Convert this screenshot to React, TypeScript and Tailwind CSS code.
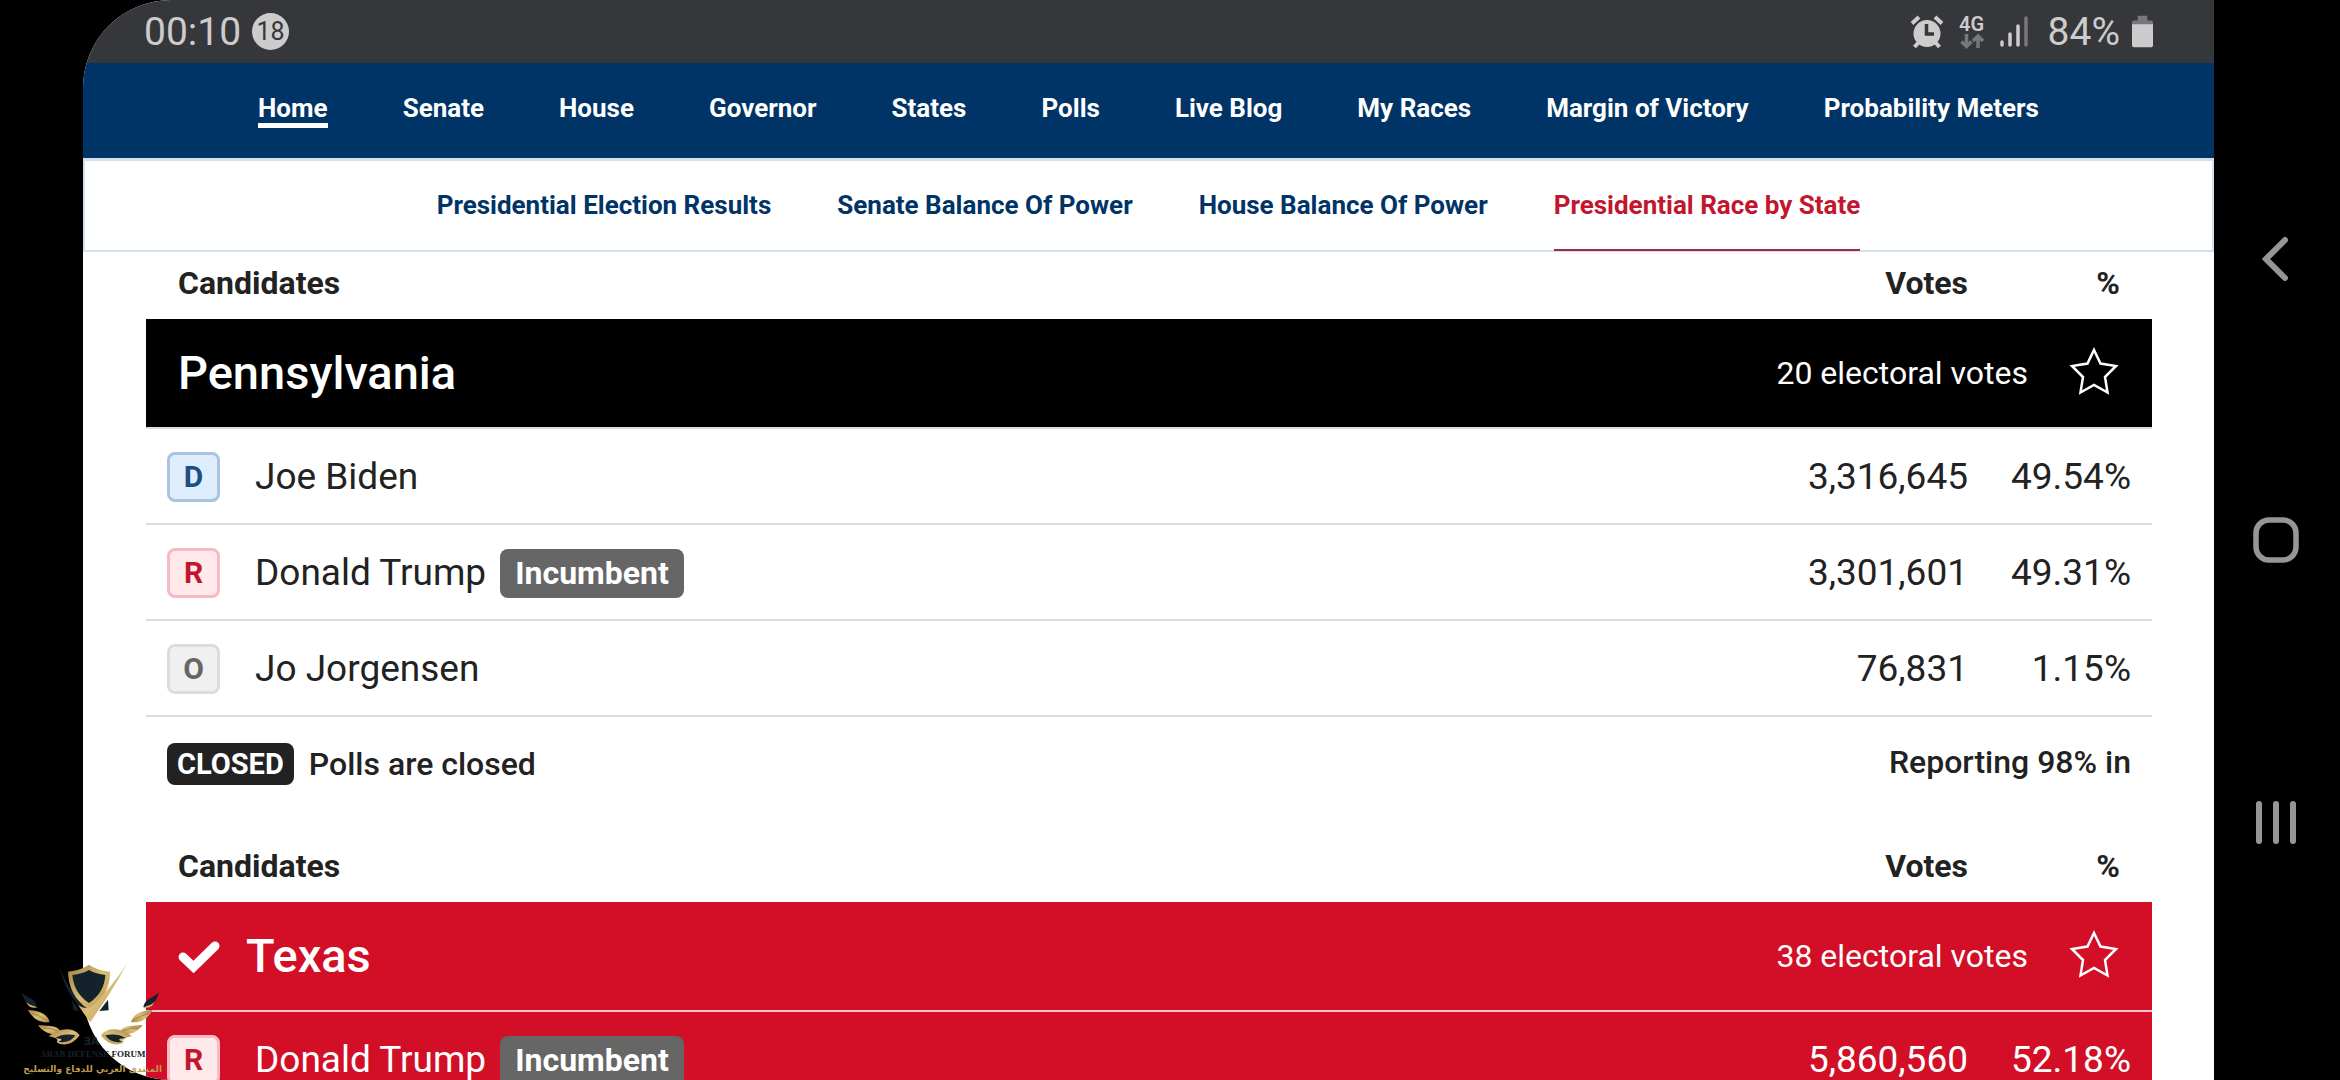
import React from "react";

type TCandidate = {
    party: "D" | "R" | "O";
    name: string;
    incumbent?: boolean;
    votes: string;
    percent: string;
    winner?: boolean;
};
type TRace = {
    state: string;
    electoralVotes: number;
    called?: boolean;
    candidates: TCandidate[];
    reporting: string;
};

const navLinks = ["Home", "Senate", "House", "Governor", "States", "Polls", "Live Blog", "My Races", "Margin of Victory", "Probability Meters"];
const subLinks = ["Presidential Election Results", "Senate Balance Of Power", "House Balance Of Power", "Presidential Race by State"];

const races: TRace[] = [
    {
        state: "Pennsylvania",
        electoralVotes: 20,
        candidates: [
            { party: "D", name: "Joe Biden", votes: "3,316,645", percent: "49.54%" },
            { party: "R", name: "Donald Trump", incumbent: true, votes: "3,301,601", percent: "49.31%" },
            { party: "O", name: "Jo Jorgensen", votes: "76,831", percent: "1.15%" },
        ],
        reporting: "Reporting 98% in",
    },
    {
        state: "Texas",
        electoralVotes: 38,
        called: true,
        candidates: [
            { party: "R", name: "Donald Trump", incumbent: true, votes: "5,860,560", percent: "52.18%", winner: true },
        ],
        reporting: "",
    },
];

const partyStyles = {
    D: "bg-[#deeeff] border-[#a9c4e0] text-[#1d4f84]",
    R: "bg-[#ffe9eb] border-[#f3bcc4] text-[#c2162e]",
    O: "bg-[#f0f0f0] border-[#dcdcdc] text-[#666666]",
};

function StatusBar() {
    return (
        <div className="flex h-[63px] items-center justify-between bg-[#36373b] px-[61px] text-[#cccccc]">
            <div className="flex items-center gap-[11px]">
                <span className="text-[39px] leading-[40px]">00:10</span>
                <span className="flex h-[37px] w-[37px] items-center justify-center rounded-full bg-[#cccccc] text-[25px] text-[#36373b]">18</span>
            </div>
            <div className="flex items-center gap-4">
                <svg width="34" height="34" viewBox="0 0 34 34" fill="none">
                    <circle cx="17" cy="18.500" r="13.500" fill="#cccccc" />
                    <path d="M2 8.500 9 2M32 8.500 25 2" stroke="#cccccc" strokeWidth="4" />
                    <path d="M9 27 4.500 32M25 27l4.500 5" stroke="#cccccc" strokeWidth="4" />
                    <path d="M16.500 9v10H24" stroke="#36373b" strokeWidth="3.500" />
                </svg>
                <div className="flex w-6 flex-col items-center">
                    <span className="text-[20px] leading-[20px] font-semibold">4G</span>
                    <svg width="24" height="15" viewBox="0 0 24 15" fill="none" stroke="#77787b" strokeWidth="3.500">
                        <path d="M6.500 0v12M1.500 7.500 6.500 12.500 11.500 7.500M18 14V2M13 7 18 2l5 5" />
                    </svg>
                </div>
                <svg width="28" height="32" viewBox="0 0 28 32" fill="none" strokeWidth="3.500" strokeLinecap="round">
                    <path d="M2 26v3M10 18v11M18 10v19" stroke="#cccccc" />
                    <path d="M26 2v27" stroke="#77787b" />
                </svg>
                <span className="pl-1 text-[39px] leading-[40px]">84%</span>
                <svg className="-ml-1" width="21" height="33" viewBox="0 0 22 33">
                    <path d="M6 0h10v5h4a2 2 0 0 1 2 2v4H0V7a2 2 0 0 1 2-2h4z" fill="#77787b" />
                    <path d="M0 9h22v22a2 2 0 0 1-2 2H2a2 2 0 0 1-2-2z" fill="#cccccc" />
                </svg>
            </div>
        </div>
    );
}

function RaceTable({ race }: { race: TRace }) {
    const stateStyle = race.called ? "bg-[#d20f26] border-[#f9c3d2]" : "bg-black border-[#d5dee3]";

    return (
        <section>
            <table className="w-full table-fixed border-separate border-spacing-0">
                <thead>
                    <tr className="h-[67px] text-[32px] leading-[36px] font-bold">
                        <th className="pb-1.5 pl-8 text-left">Candidates</th>
                        <th className="w-[300px] pb-1.5 text-right">Votes</th>
                        <th className="w-[184px] pr-8 pb-1.5 text-right">%</th>
                    </tr>
                </thead>
                <tbody>
                    <tr className="h-[110px] text-white">
                        <td colSpan={3} className={`border-b-2 px-8 ${stateStyle}`}>
                            <div className="flex items-center justify-between">
                                <h2 className="flex items-center gap-[26px] text-[47px] leading-[56px] font-medium">
                                    {race.called &&
                                        <svg width="42" height="33" viewBox="0 0 42 33" fill="none" stroke="white" strokeWidth="9" strokeLinecap="round">
                                            <path d="M5 17 15.500 27 37 6" />
                                        </svg>
                                    }
                                    {race.state}
                                </h2>
                                <div className="flex items-center gap-[40px]">
                                    <span className="text-[32px] leading-[40px]">{race.electoralVotes} electoral votes</span>
                                    <button aria-label={`Follow ${race.state}`}>
                                        <svg className="block" width="52" height="52" viewBox="0 0 52 52" fill="none" stroke="white" strokeWidth="2.500">
                                            <path d="M26 3 32.500 16.500 48 19 37 30 39.500 45.500 26 38 12.500 45.500 15 30 4 19 19.500 16.500Z" />
                                        </svg>
                                    </button>
                                </div>
                            </div>
                        </td>
                    </tr>
                    {race.candidates.map((c) => {
                        const cell = c.winner ? "border-b-2 border-[#f9c3d2] bg-[#d20f26] text-white" : "border-b-2 border-[#d5dee3]";
                        return (
                            <tr key={c.name} className="h-[96px] text-[37px] leading-[44px]">
                                <td className={`pt-0.5 pl-[21px] ${cell}`}>
                                    <div className="flex items-center">
                                        <span className={`flex h-[50px] w-[53px] items-center justify-center rounded-lg border-3 text-[30px] font-bold ${partyStyles[c.party]}`}>{c.party}</span>
                                        <span className="pl-[35px]">{c.name}</span>
                                        {c.incumbent &&
                                            <span className="ml-[14px] rounded-lg bg-[#666666] px-[15px] text-[32px] leading-[49px] font-bold text-white">Incumbent</span>
                                        }
                                    </div>
                                </td>
                                <td className={`pt-0.5 text-right ${cell}`}>{c.votes}</td>
                                <td className={`pt-0.5 pr-[21px] text-right ${cell}`}>{c.percent}</td>
                            </tr>
                        );
                    })}
                </tbody>
            </table>
            <div className="flex h-[118px] items-start justify-between px-[21px] pt-[26px] text-[32px] font-medium">
                <div className="flex gap-[15px] leading-[42px]">
                    <span className="rounded-lg bg-[#222222] px-[10px] text-[29px] font-bold text-white">CLOSED</span>
                    <span>Polls are closed</span>
                </div>
                <span className="leading-[38px]">{race.reporting}</span>
            </div>
        </section>
    );
}

function SystemNav() {
    return (
        <aside className="flex w-[126px] flex-col items-center justify-center gap-[234px] pr-[3px]">
            <button aria-label="Back">
                <svg className="block" width="48" height="48" viewBox="0 0 48 48" fill="none" stroke="#969696" strokeWidth="6" strokeLinecap="round">
                    <path d="M33 6 14 25 33 44" />
                </svg>
            </button>
            <button aria-label="Home">
                <svg className="block" width="48" height="48" viewBox="0 0 48 48" fill="none" stroke="#969696" strokeWidth="5.500">
                    <rect x="4" y="4" width="40" height="40" rx="13" />
                </svg>
            </button>
            <button aria-label="Recent apps">
                <svg className="block" width="48" height="48" viewBox="0 0 48 48" fill="none" stroke="#969696" strokeWidth="6" strokeLinecap="round">
                    <path d="M7 6v37M24 6v37M41 6v37" />
                </svg>
            </button>
        </aside>
    );
}

// One wing of the emblem, mirrored for the other side
function Wing() {
    return (
        <>
            <path d="M35 110C48 130 76 126 82 157C58 154 42 142 35 110Z" fill="#14222c" />
            <path d="M48 138C58 154 70 149 82 158C66 160 54 156 48 138Z" fill="url(#gold)" />
            <path d="M54 164C78 168 108 168 119 201C92 206 66 190 54 164Z" fill="url(#gold)" />
            <path d="M66 176C86 180 98 188 118 200" stroke="#8a6c32" strokeWidth="2" fill="none" />
            <path d="M84 210C112 214 144 208 155 234C126 243 98 232 84 210Z" fill="url(#gold)" />
            <path d="M98 220C118 218 136 224 154 233" stroke="#8a6c32" strokeWidth="2" fill="none" />
            <path d="M116 244C144 222 184 212 209 240C196 262 164 278 140 262C148 252 134 248 116 244Z" fill="url(#gold)" />
            <path d="M134 250C158 234 180 238 196 241C182 262 160 264 146 260C162 254 154 250 134 250Z" fill="#14222c" />
        </>
    );
}

function Watermark() {
    return (
        <svg className="pointer-events-none absolute bottom-0 left-[10px]" width="160" height="125" viewBox="0 0 480 375">
            <defs>
                <linearGradient id="gold" x1="0" y1="0" x2="1" y2="1">
                    <stop offset="0" stopColor="#a5803f" />
                    <stop offset="0.500" stopColor="#d9bd78" />
                    <stop offset="1" stopColor="#b8924d" />
                </linearGradient>
            </defs>
            <Wing />
            <g transform="translate(482 0) scale(-1 1)"><Wing /></g>
            <path d="M148 34C164 84 196 124 234 158L214 160C184 132 158 84 148 34Z" fill="#14222c" />
            <path d="M237 29C218 42 198 47 174 50C176 96 192 134 238 164C282 134 300 96 300 50C276 47 256 42 237 29Z" fill="url(#gold)" />
            <path d="M237 45C222 54 205 58 187 60C190 94 204 122 237 144C270 122 284 94 286 60C268 58 252 54 237 45Z" fill="#14222c" />
            <path d="M350 27C318 88 280 146 240 202L204 150C222 162 240 162 254 148C288 112 322 70 350 27Z" fill="url(#gold)" />
            <path d="M186 134 208 168 190 166ZM294 134 296 166 268 168Z" fill="#14222c" />
            <text x="244" y="271" textAnchor="middle" fill="#14222c" className="font-['DejaVu_Sans',sans-serif] text-[32px] font-bold">ƎA</text>
            <text x="248" y="305" textAnchor="middle" fill="#14222c" className="font-['Liberation_Serif',serif] text-[27px] font-bold">ARAB DEFENSE FORUM</text>
            <text x="248" y="352" textAnchor="middle" direction="rtl" fill="#bd994f" className="font-['DejaVu_Sans',sans-serif] text-[27px] font-bold">المنتدى العربي للدفاع والتسليح</text>
        </svg>
    );
}

export default function App() {
    return (
        <div className="relative flex h-screen overflow-hidden bg-black pl-[83px] font-['Roboto',sans-serif] text-[#222222]">
            <main className="min-w-0 flex-1 overflow-hidden rounded-l-[88px] bg-white">
                <StatusBar />
                <nav className="flex h-[95px] items-center justify-center gap-[75px] bg-[#003366] pb-1.5 text-[26px] leading-[30px] font-bold text-white">
                    {navLinks.map((label, i) => (
                        <a key={label} href="#" className={i === 0 ? "border-y-5 border-t-transparent border-b-white" : ""}>{label}</a>
                    ))}
                </nav>
                <nav className="flex h-[94px] items-stretch justify-center gap-[66px] border-2 border-t-3 border-[#d3e0ee] text-[26px] font-bold text-[#003366]">
                    {subLinks.map((label, i) => (
                        <a key={label} href="#" className={`-mb-px flex items-center border-b-2 ${i === 3 ? "border-[#a32a40] text-[#c2162e]" : "border-transparent"}`}>{label}</a>
                    ))}
                </nav>
                <div className="pr-[62px] pl-[63px]">
                    {races.map((race) => <RaceTable key={race.state} race={race} />)}
                </div>
            </main>
            <SystemNav />
            <Watermark />
        </div>
    );
}
